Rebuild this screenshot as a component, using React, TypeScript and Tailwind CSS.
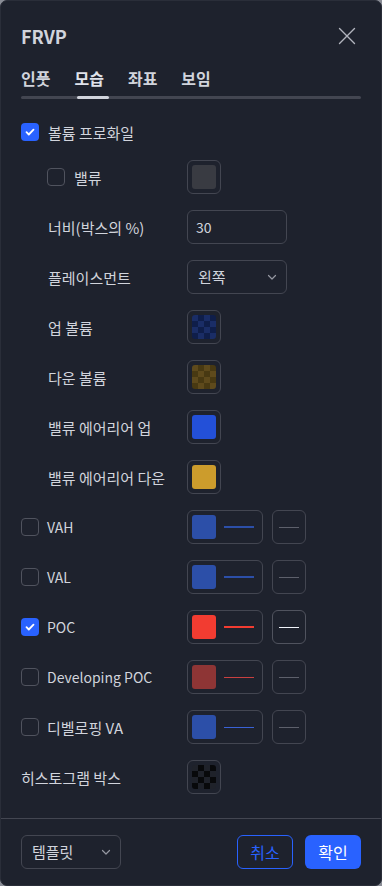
import type { ReactNode } from 'react'

const FONT = { fontFamily: '"Noto Sans CJK KR", "Noto Sans", Inter, sans-serif' }

function Check({ on }: { on?: boolean }) {
  return on ? (
    <div className="w-[18px] h-[18px] rounded-[4px] bg-[#2962ff] flex items-center justify-center shrink-0">
      <svg width="12" height="12" viewBox="0 0 12 12" fill="none">
        <path d="M2.5 6.2l2.3 2.3 4.7-4.8" stroke="#fff" strokeWidth="1.8" strokeLinecap="round" strokeLinejoin="round" />
      </svg>
    </div>
  ) : (
    <div className="w-[18px] h-[18px] rounded-[4px] border border-[#50535e] shrink-0" />
  )
}

function Checker({ a, b }: { a: string; b: string }) {
  const cells = []
  for (let r = 0; r < 4; r++)
    for (let c = 0; c < 4; c++)
      cells.push(<rect key={`${r}-${c}`} x={c * 6} y={r * 6} width="6" height="6" fill={(r + c) % 2 ? b : a} />)
  return (
    <svg width="24" height="24" viewBox="0 0 24 24" className="rounded-[3px]">
      {cells}
    </svg>
  )
}

function Swatch({ children }: { children: ReactNode }) {
  return (
    <div className="w-[34px] h-[34px] rounded-[6px] border border-[#434651] flex items-center justify-center">
      {children}
    </div>
  )
}

function Solid({ color }: { color: string }) {
  return <div className="w-[24px] h-[24px] rounded-[3px]" style={{ background: color }} />
}

function LineCombo({ color, line, thin, active }: { color: string; line?: string; thin?: boolean; active?: boolean }) {
  return (
    <div className="flex gap-[9px]">
      <div className="w-[76px] h-[34px] rounded-[6px] border border-[#434651] flex items-center pl-[4px] gap-[8px]">
        <div className="w-[24px] h-[24px] rounded-[3px]" style={{ background: color }} />
        <div className={`w-[30px] ${thin ? 'h-px' : 'h-[2px]'}`} style={{ background: line ?? color }} />
      </div>
      <div className={`w-[34px] h-[34px] rounded-[6px] border flex items-center justify-center ${active ? 'border-[#50535e]' : 'border-[#434651]'}`}>
        <div className={`w-[20px] h-px ${active ? 'bg-[#f0f3fa]' : 'bg-[#5d606b]'}`} />
      </div>
    </div>
  )
}

function Chevron() {
  return (
    <svg width="12" height="12" viewBox="0 0 12 12" fill="none">
      <path d="M2.5 4.5L6 8l3.5-3.5" stroke="#9598a1" strokeWidth="1.2" strokeLinecap="round" strokeLinejoin="round" />
    </svg>
  )
}

function Row({ left, right, mt = 'mt-4' }: { left: ReactNode; right?: ReactNode; mt?: string }) {
  return (
    <div className={`flex items-center h-[34px] ${mt}`}>
      <div className="w-[166px] flex items-center">{left}</div>
      {right}
    </div>
  )
}

const label = 'text-[15px] text-[#d1d4dc] leading-none'
const latin = 'text-[14px] text-[#d1d4dc] leading-none'

export default function App() {
  return (
    <div className="w-[382px] h-[886px] bg-[#8a8d96]" style={FONT}>
      <div className="w-full h-full bg-[#1e222d] rounded-[7px] border border-[#2a2e39] flex flex-col overflow-hidden">
        {/* Header */}
        <div className="flex items-center justify-between pl-[20px] pr-[25px] pt-[23px] h-[47px]">
          <span className="text-[18px] font-bold text-[#d1d4dc] leading-none">FRVP</span>
          <svg width="18" height="18" viewBox="0 0 18 18" fill="none">
            <path d="M1.5 1.5l15 15M16.5 1.5l-15 15" stroke="#b2b5be" strokeWidth="1.4" strokeLinecap="round" />
          </svg>
        </div>

        {/* Tabs */}
        <div className="px-[20px] mt-[22px]">
          <div className="flex gap-[24px] text-[16px] font-bold text-[#d1d4dc] leading-none h-[22px]">
            <span>인풋</span>
            <span className="text-[#e0e3eb]">모습</span>
            <span>좌표</span>
            <span>보임</span>
          </div>
          <div className="mt-[4px] h-[3px] w-[340px] rounded-full bg-[#434651] relative">
            <div className="absolute left-[56px] top-0 h-[3px] w-[32px] rounded-full bg-[#d1d4dc]" />
          </div>
        </div>

        {/* Body */}
        <div className="px-[20px] pt-[16px] flex-1">
          <Row
            mt="mt-0"
            left={
              <div className="flex items-center gap-[9px]">
                <Check on />
                <span className={label}>볼륨 프로화일</span>
              </div>
            }
          />
          <Row
            mt="mt-[11px]"
            left={
              <div className="flex items-center gap-[9px] pl-[26px]">
                <Check />
                <span className={label}>밸류</span>
              </div>
            }
            right={
              <Swatch>
                <Solid color="#393b42" />
              </Swatch>
            }
          />
          <Row
            left={<span className={`${label} pl-[27px]`}>너비(박스의 %)</span>}
            right={
              <div className="w-[100px] h-[34px] rounded-[6px] border border-[#434651] flex items-center pl-[8px] text-[14px] text-[#d1d4dc]">
                30
              </div>
            }
          />
          <Row
            left={<span className={`${label} pl-[27px]`}>플레이스먼트</span>}
            right={
              <div className="w-[100px] h-[34px] rounded-[6px] border border-[#434651] flex items-center justify-between pl-[10px] pr-[8px] text-[15px] text-[#d1d4dc]">
                <span>왼쪽</span>
                <Chevron />
              </div>
            }
          />
          <Row
            left={<span className={`${label} pl-[27px]`}>업 볼륨</span>}
            right={
              <Swatch>
                <Checker a="#1a2d66" b="#0f1e4a" />
              </Swatch>
            }
          />
          <Row
            left={<span className={`${label} pl-[27px]`}>다운 볼륨</span>}
            right={
              <Swatch>
                <Checker a="#5e4a1c" b="#483912" />
              </Swatch>
            }
          />
          <Row
            left={<span className={`${label} pl-[27px]`}>밸류 에어리어 업</span>}
            right={
              <Swatch>
                <Solid color="#2350d8" />
              </Swatch>
            }
          />
          <Row
            left={<span className={`${label} pl-[27px]`}>밸류 에어리어 다운</span>}
            right={
              <Swatch>
                <Solid color="#cc9c2c" />
              </Swatch>
            }
          />
          <Row
            left={
              <div className="flex items-center gap-[8px]">
                <Check />
                <span className={latin}>VAH</span>
              </div>
            }
            right={<LineCombo color="#2c4fa8" />}
          />
          <Row
            left={
              <div className="flex items-center gap-[8px]">
                <Check />
                <span className={latin}>VAL</span>
              </div>
            }
            right={<LineCombo color="#2c4fa8" />}
          />
          <Row
            left={
              <div className="flex items-center gap-[8px]">
                <Check on />
                <span className={latin}>POC</span>
              </div>
            }
            right={<LineCombo color="#f23c31" active />}
          />
          <Row
            left={
              <div className="flex items-center gap-[8px]">
                <Check />
                <span className={latin}>Developing POC</span>
              </div>
            }
            right={<LineCombo color="#8e3535" line="#c94040" thin />}
          />
          <Row
            left={
              <div className="flex items-center gap-[8px]">
                <Check />
                <span className={label}>디벨로핑 VA</span>
              </div>
            }
            right={<LineCombo color="#2c4fa8" line="#3a62d6" thin />}
          />
          <Row
            left={<span className={label}>히스토그램 박스</span>}
            right={
              <Swatch>
                <Checker a="#1f222a" b="#08090b" />
              </Swatch>
            }
          />
        </div>

        {/* Footer */}
        <div className="border-t border-[#434651] h-[67px] px-[20px] flex items-center justify-between">
          <div className="w-[100px] h-[34px] rounded-[6px] border border-[#434651] flex items-center justify-between pl-[10px] pr-[8px] text-[15px] text-[#d1d4dc]">
            <span>템플릿</span>
            <Chevron />
          </div>
          <div className="flex gap-[12px]">
            <div className="w-[56px] h-[34px] rounded-[6px] border border-[#2962ff] flex items-center justify-center text-[16px] text-[#2962ff]">
              취소
            </div>
            <div className="w-[56px] h-[34px] rounded-[6px] bg-[#2962ff] flex items-center justify-center text-[16px] text-white">
              확인
            </div>
          </div>
        </div>
      </div>
    </div>
  )
}
